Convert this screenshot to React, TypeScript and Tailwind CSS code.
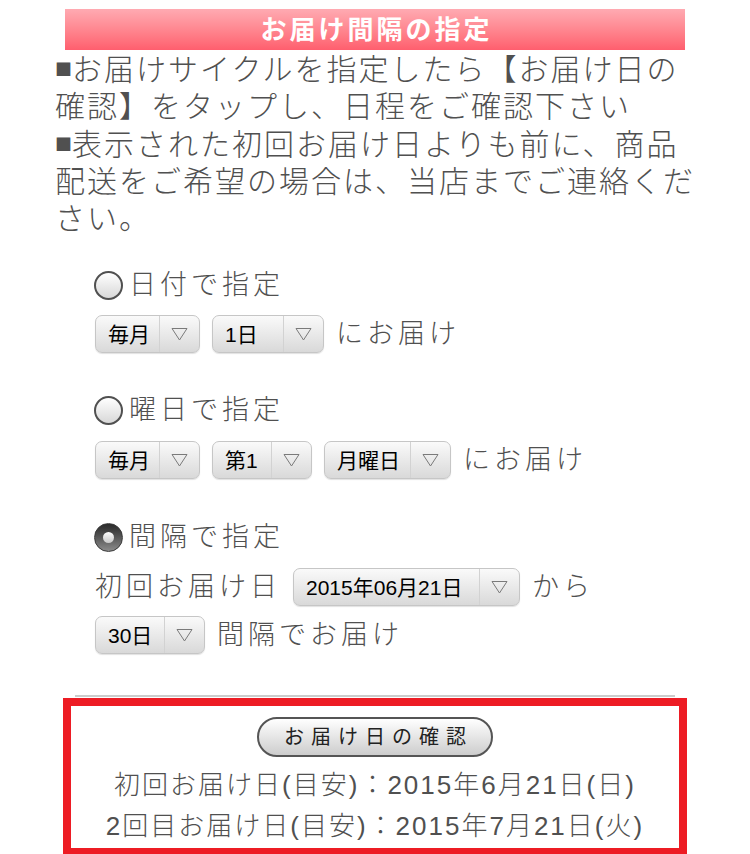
import React from 'react'

const FONT = '"Liberation Sans", "Noto Sans CJK JP", sans-serif'

function Radio({ checked }: { checked?: boolean }) {
    if (checked) {
        return (
            <span className="w-[29px] h-[29px] shrink-0 rounded-full border border-[#3a3a3a] bg-linear-to-b from-[#2a2a2a] to-[#8c8c8c] flex items-center justify-center">
                <span className="w-[11px] h-[11px] rounded-full bg-linear-to-b from-white to-[#c8c8c8]" />
            </span>
        )
    }
    return <span className="w-[29px] h-[29px] shrink-0 rounded-full border-[2px] border-[#505050] bg-linear-to-b from-white to-[#d8d8d8]" />
}

function Select({ label, className }: { label: string; className: string }) {
    return (
        <div className={`flex h-[38px] shrink-0 rounded-[7px] border border-[#c6c6c6] bg-linear-to-b from-[#fafafa] to-[#d9d9d9] shadow-[0_1px_1px_rgba(0,0,0,0.12)] ${className}`}>
            <span className="flex-1 flex items-center pl-[12px] text-[21px] leading-none font-normal text-black tracking-normal">{label}</span>
            <span className="w-[40px] border-l border-[#d2d2d2] flex items-center justify-center">
                <svg width="17" height="14" viewBox="0 0 17 14">
                    <polygon points="1,1.5 16,1.5 8.5,13" fill="none" stroke="#7a7a7a" strokeWidth="1" />
                </svg>
            </span>
        </div>
    )
}

export default function App() {
    return (
        <div className="w-[750px] h-[854px] bg-white overflow-hidden text-[#505050] font-light" style={{ fontFamily: FONT }}>
            <div className="mx-[65px] mt-[9px] h-[41px] bg-linear-to-b from-[#ffaab2] to-[#ff5e6e] flex items-center justify-center text-white text-[26px] leading-none font-bold tracking-[3px] pl-[3px]">
                お届け間隔の指定
            </div>

            <div className="px-[55px] text-[30px] leading-[37px] tracking-[2px] whitespace-nowrap">
                <div><span className="text-[17px] align-[4px] tracking-normal" style={{ fontFamily: '"Noto Sans CJK JP", sans-serif' }}>■</span>お届けサイクルを指定したら【お届け日の</div>
                <div>確認】をタップし、日程をご確認下さい</div>
                <div><span className="text-[17px] align-[4px] tracking-normal" style={{ fontFamily: '"Noto Sans CJK JP", sans-serif' }}>■</span>表示された初回お届け日よりも前に、商品</div>
                <div>配送をご希望の場合は、当店までご連絡くだ</div>
                <div>さい。</div>
            </div>

            <div className="pl-[94px] mt-[30px] text-[27px] leading-[36px] tracking-[4px] whitespace-nowrap">
                <div className="flex items-center h-[36px]">
                    <Radio />
                    <span className="ml-[6px]">日付で指定</span>
                </div>
                <div className="flex items-center gap-[12px] mt-[12px] pl-[1px]">
                    <Select label="毎月" className="w-[105px]" />
                    <Select label="1日" className="w-[112px]" />
                    <span>にお届け</span>
                </div>

                <div className="flex items-center h-[36px] mt-[39px]">
                    <Radio />
                    <span className="ml-[6px]">曜日で指定</span>
                </div>
                <div className="flex items-center gap-[12px] mt-[13px] pl-[1px]">
                    <Select label="毎月" className="w-[105px]" />
                    <Select label="第1" className="w-[100px]" />
                    <Select label="月曜日" className="w-[127px]" />
                    <span>にお届け</span>
                </div>

                <div className="flex items-center h-[36px] mt-[40px]">
                    <Radio checked />
                    <span className="ml-[6px]">間隔で指定</span>
                </div>
                <div className="flex items-center gap-[12px] mt-[13px] pl-[1px]">
                    <span>初回お届け日</span>
                    <Select label="2015年06月21日" className="w-[227px]" />
                    <span>から</span>
                </div>
                <div className="flex items-center gap-[12px] mt-[10px] pl-[1px]">
                    <Select label="30日" className="w-[110px]" />
                    <span>間隔でお届け</span>
                </div>
            </div>

            <div className="mx-[75px] mt-[41px] h-[2px] bg-[#cccccc]" />

            <div className="mx-[63px] mt-[1px] border-[8px] border-[#ed1c24] pt-[11px] pb-[1px] flex flex-col items-center">
                <button className="w-[236px] h-[40px] rounded-full border-2 border-[#555] bg-linear-to-b from-white to-[#cdcdcd] text-[20px] leading-none font-normal tracking-[7px] pl-[7px] text-[#222]">
                    お届け日の確認
                </button>
                <div className="mt-[8px] text-[26px] leading-[41px] tracking-[2px] text-center whitespace-nowrap">
                    <div>初回お届け日(目安)：2015年6月21日(日)</div>
                    <div>2回目お届け日(目安)：2015年7月21日(火)</div>
                </div>
            </div>
        </div>
    )
}
